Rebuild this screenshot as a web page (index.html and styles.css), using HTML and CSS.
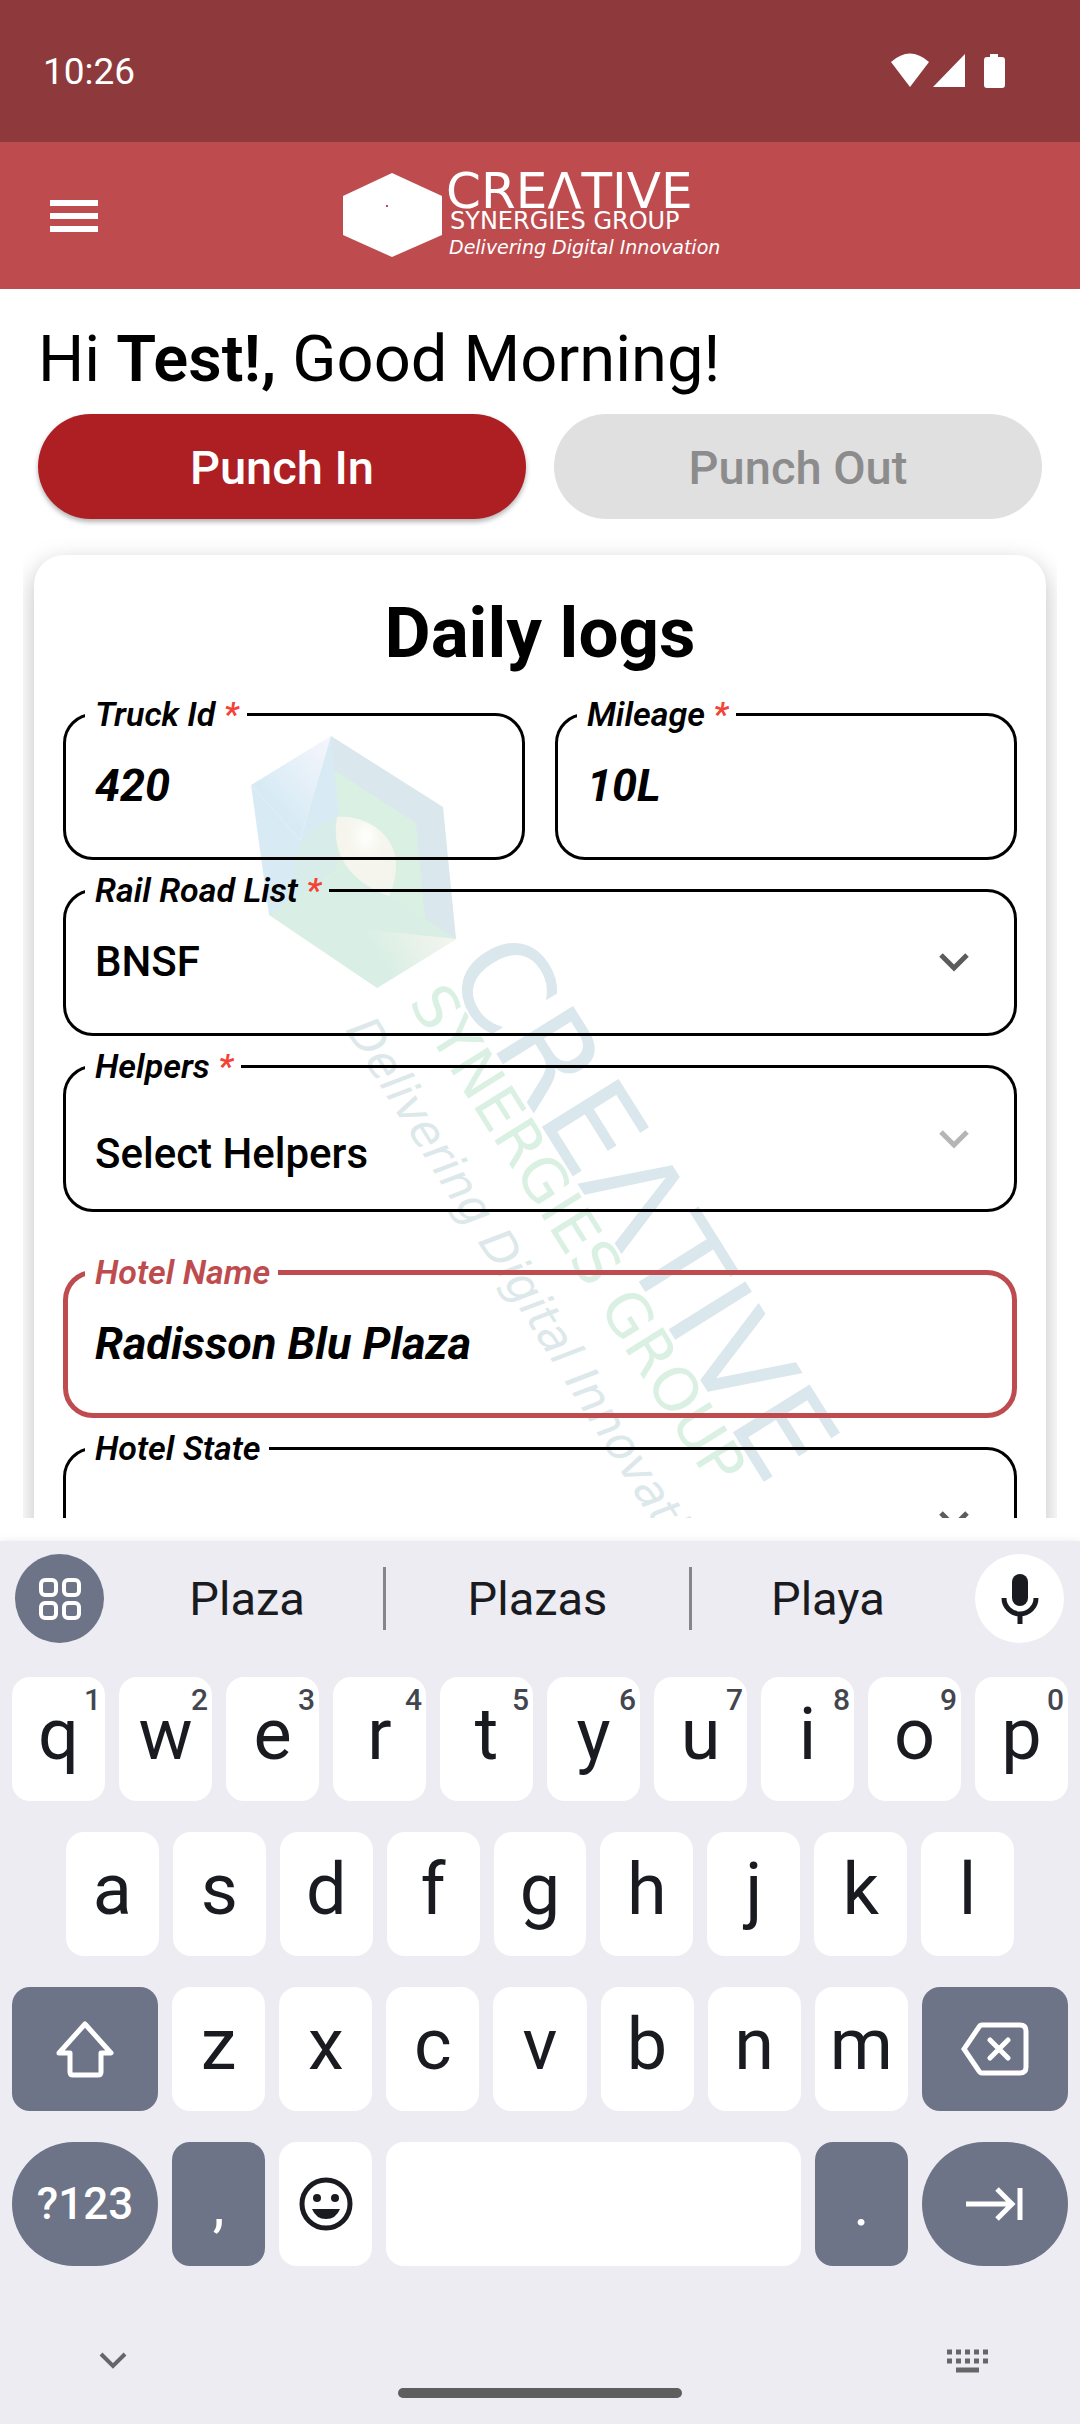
FILE: index.html
```html
<!DOCTYPE html>
<html lang="en">
<head>
<meta charset="utf-8">
<meta name="viewport" content="width=device-width, initial-scale=1">
<title>Daily logs</title>
<link rel="stylesheet" href="styles.css">
</head>
<body>
<div class="status-bar">
  <time class="clock">10:26</time>
  <svg class="status-icons" viewBox="0 0 116 36" aria-hidden="true">
    <path d="M1 9Q20 -8 39 9L20 34Z"/>
    <path d="M43 34L75 1V34Z"/>
    <path d="M100 1h8v3h4q3 0 3 3v25q0 3-3 3h-15q-3 0-3-3V7q0-3 3-3h3z"/>
  </svg>
</div>

<header class="app-bar">
  <button class="menu-button" type="button" aria-label="Menu"><span></span><span></span><span></span></button>
  <svg class="logo" viewBox="0 -12 394 112" role="img" aria-label="Creative Synergies Group">
    <path d="M0 24L49 1L99 24V63L49 85L0 63Z"/>
    <path class="logo-dot" d="M43 33h2v2h-2z"/>
    <text class="logo-name" x="103" y="36">CREΛTIVE</text>
    <text class="logo-group" x="107" y="57">SYNERGIES GROUP</text>
    <text class="logo-tagline" x="106" y="82">Delivering Digital Innovation</text>
  </svg>
</header>

<main class="content">
  <h1 class="greeting">Hi <strong>Test!,</strong> Good Morning!</h1>
  <div class="punch-row">
    <button class="punch punch-in" type="button">Punch In</button>
    <button class="punch punch-out" type="button" disabled>Punch Out</button>
  </div>

  <div class="card-viewport">
    <form class="card">
      <svg class="watermark" viewBox="230 720 640 1000" aria-hidden="true">
        <defs>
          <linearGradient id="wm-left" x1="1" y1="0" x2="0.4" y2="0.7"><stop offset="0" stop-color="#f7f6fc"/><stop offset="1" stop-color="#d8ebf5"/></linearGradient>
          <linearGradient id="wm-base" x1="1" y1="0.2" x2="0.2" y2="0.5"><stop offset="0" stop-color="#f5f5ef"/><stop offset="1" stop-color="#d9efe5"/></linearGradient>
          <radialGradient id="wm-pearl" cx="0.5" cy="0.25" r="0.7"><stop offset="0" stop-color="#fefefc"/><stop offset="0.4" stop-color="#f6f6ef"/><stop offset="1" stop-color="#f3f4ec"/></radialGradient>
        </defs>
        <path fill="#dae7ed" d="M331 736L443 807L456 939L420 920L331 770Z"/>
        <path fill="#d9f0e3" d="M334 770L416 823L425 919L456 939L269 915L300 850L338 818Z"/>
        <path fill="url(#wm-left)" d="M251 785L331 736L300 840Z"/>
        <path fill="#d8ebf5" d="M251 785L300 840L331 736L339 816L336 865L269 915Z"/>
        <path fill="#d8ede9" d="M338 818C310 824 294 846 294 872L297 901L336 869Z"/>
        <path fill="#d9efe5" d="M269 915L345 868L456 939L377 988Z"/>
        <path fill="url(#wm-base)" d="M362 929L456 939L377 988Z"/>
        <path fill="url(#wm-pearl)" d="M337 817C365 815 392 832 396 860Q397 880 389 896C360 886 329 862 337 817Z"/>
        <text class="wm-name" transform="translate(444 970) rotate(58)">CREΛTIVE</text>
        <text class="wm-group" transform="translate(408 1002) rotate(58)">SYNERGIES GROUP</text>
        <text class="wm-tagline" transform="translate(345 1030) rotate(58)">Delivering Digital Innovation</text>
      </svg>

      <h2 class="card-title">Daily logs</h2>
      <div class="field-pair">
        <fieldset class="field">
          <legend><label for="truck">Truck Id <span class="req">*</span></label></legend>
          <input class="value" id="truck" type="text" value="420">
        </fieldset>
        <fieldset class="field">
          <legend><label for="mileage">Mileage <span class="req">*</span></label></legend>
          <input class="value" id="mileage" type="text" value="10L">
        </fieldset>
      </div>
      <fieldset class="field">
        <legend><label for="railroad">Rail Road List <span class="req">*</span></label></legend>
        <div class="select-row">
          <select class="value" id="railroad"><option>BNSF</option></select>
          <svg class="chevron" viewBox="0 0 30 20" aria-hidden="true"><path d="M2 2L15 15L28 2"/></svg>
        </div>
      </fieldset>
      <fieldset class="field field-helpers">
        <legend><label for="helpers">Helpers <span class="req">*</span></label></legend>
        <div class="select-row">
          <select class="value" id="helpers"><option>Select Helpers</option></select>
          <svg class="chevron chevron-muted" viewBox="0 0 30 20" aria-hidden="true"><path d="M2 2L15 15L28 2"/></svg>
        </div>
      </fieldset>
      <fieldset class="field field-active">
        <legend><label for="hotel">Hotel Name</label></legend>
        <input class="value" id="hotel" type="text" value="Radisson Blu Plaza">
      </fieldset>
      <fieldset class="field">
        <legend><label for="state">Hotel State</label></legend>
        <div class="select-row">
          <select class="value" id="state"><option></option></select>
          <svg class="chevron" viewBox="0 0 30 20" aria-hidden="true"><path d="M2 2L15 15L28 2"/></svg>
        </div>
      </fieldset>
    </form>
  </div>
</main>

<section class="keyboard" aria-label="Keyboard">
  <div class="suggestions">
    <button class="round round-dark" type="button" aria-label="Tools">
      <svg viewBox="0 0 44 44" width="44" height="44" aria-hidden="true"><g fill="none" stroke="#fff" stroke-width="4"><rect x="3" y="3" width="15" height="15" rx="4"/><rect x="26" y="3" width="15" height="15" rx="4"/><rect x="3" y="26" width="15" height="15" rx="4"/><rect x="26" y="26" width="15" height="15" rx="4"/></g></svg>
    </button>
    <button class="word" type="button">Plaza</button>
    <button class="word word-mid" type="button">Plazas</button>
    <button class="word" type="button">Playa</button>
    <button class="round round-mic" type="button" aria-label="Voice input">
      <svg viewBox="0 0 38 52" width="38" height="52" aria-hidden="true"><rect x="11" y="1" width="16" height="32" rx="8" fill="#1a1b20"/><path d="M3 25a16 16 0 0 0 32 0M19 41v10" fill="none" stroke="#1a1b20" stroke-width="5"/></svg>
    </button>
  </div>

  <div class="keys">
    <div class="key-row">
      <button class="key" type="button">q<sup>1</sup></button>
      <button class="key" type="button">w<sup>2</sup></button>
      <button class="key" type="button">e<sup>3</sup></button>
      <button class="key" type="button">r<sup>4</sup></button>
      <button class="key" type="button">t<sup>5</sup></button>
      <button class="key" type="button">y<sup>6</sup></button>
      <button class="key" type="button">u<sup>7</sup></button>
      <button class="key" type="button">i<sup>8</sup></button>
      <button class="key" type="button">o<sup>9</sup></button>
      <button class="key" type="button">p<sup>0</sup></button>
    </div>
    <div class="key-row key-row-inset">
      <button class="key" type="button">a</button>
      <button class="key" type="button">s</button>
      <button class="key" type="button">d</button>
      <button class="key" type="button">f</button>
      <button class="key" type="button">g</button>
      <button class="key" type="button">h</button>
      <button class="key" type="button">j</button>
      <button class="key" type="button">k</button>
      <button class="key" type="button">l</button>
    </div>
    <div class="key-row">
      <button class="key key-dark key-wide" type="button" aria-label="Shift">
        <svg viewBox="0 0 60 58" width="60" height="58" aria-hidden="true"><path d="M30 4L56 33H46V52Q46 55 43 55H18Q15 55 15 52V33H4Z" fill="none" stroke="#fff" stroke-width="5" stroke-linejoin="round"/></svg>
      </button>
      <button class="key" type="button">z</button>
      <button class="key" type="button">x</button>
      <button class="key" type="button">c</button>
      <button class="key" type="button">v</button>
      <button class="key" type="button">b</button>
      <button class="key" type="button">n</button>
      <button class="key" type="button">m</button>
      <button class="key key-dark key-wide" type="button" aria-label="Backspace">
        <svg viewBox="0 0 68 54" width="68" height="54" aria-hidden="true"><path d="M21 3H59Q65 3 65 9V45Q65 51 59 51H21Q19 51 18 49L3 27L18 5Q19 3 21 3ZM29 18L47 36M47 18L29 36" fill="none" stroke="#fff" stroke-width="5" stroke-linecap="round"/></svg>
      </button>
    </div>
    <div class="key-row">
      <button class="key key-dark key-wide key-pill key-symbols" type="button">?123</button>
      <button class="key key-dark key-punct" type="button">,</button>
      <button class="key key-icon" type="button" aria-label="Emoji">
        <svg viewBox="0 0 54 54" width="54" height="54" aria-hidden="true"><circle cx="27" cy="27" r="24" fill="none" stroke="#1a1b20" stroke-width="5"/><circle cx="18" cy="21" r="4" fill="#1a1b20"/><circle cx="36" cy="21" r="4" fill="#1a1b20"/><path d="M13 32H41Q37 42 27 42T13 32Z" fill="#1a1b20"/></svg>
      </button>
      <button class="key key-space" type="button" aria-label="Space"></button>
      <button class="key key-dark key-punct" type="button">.</button>
      <button class="key key-dark key-wide key-pill key-icon" type="button" aria-label="Next field">
        <svg viewBox="0 0 58 34" width="58" height="34" aria-hidden="true"><path d="M0 17H45M31 2L46 17L31 32M54 1V33" fill="none" stroke="#fff" stroke-width="5"/></svg>
      </button>
    </div>
  </div>

  <div class="nav-row">
    <button class="nav-button" type="button" aria-label="Hide keyboard">
      <svg viewBox="0 0 28 18" width="28" height="18" aria-hidden="true"><path d="M2 2L14 14L26 2" fill="none" stroke="#66666a" stroke-width="4"/></svg>
    </button>
    <button class="nav-button" type="button" aria-label="Switch keyboard">
      <svg viewBox="0 0 41 24" width="41" height="24" aria-hidden="true"><path d="M0 3H41M0 12H41" fill="none" stroke="#66666a" stroke-width="5" stroke-dasharray="5 4"/><path d="M9 21H32" stroke="#66666a" stroke-width="5"/></svg>
    </button>
  </div>
  <div class="home-bar"></div>
</section>
</body>
</html>
```

FILE: styles.css
```css
* { box-sizing: border-box; }

body {
  margin: 0;
  min-height: 100vh;
  display: flex;
  flex-direction: column;
  background: #fff;
  color: #000;
  font-family: Roboto, "Noto Sans", sans-serif;
}

button {
  border: 0;
  padding: 0;
  background: none;
  color: inherit;
  font-family: inherit;
}

svg { display: block; flex: none; }

.status-bar {
  display: flex;
  align-items: center;
  justify-content: space-between;
  height: 142px;
  padding: 0 74px 0 43px;
  background: #8e3a3d;
  color: #fff;
}
.clock { font-size: 37px; }
.status-icons { width: 116px; height: 36px; fill: #fff; }

.app-bar {
  display: grid;
  grid-template-columns: 1fr auto 1fr;
  align-items: center;
  height: 147px;
  padding: 0 50px;
  background: #be4c4f;
}
.menu-button {
  display: grid;
  gap: 7px;
  width: 48px;
}
.menu-button span { height: 6px; background: #fff; }
.logo { width: 394px; height: 112px; fill: #fff; }
.logo-dot { fill: #be4c4f; }
.logo text, .watermark text { font-family: "DejaVu Sans", sans-serif; }
.logo-name { font-size: 50px; }
.logo-group { font-size: 24px; }
.logo-tagline { font-size: 19px; font-style: italic; }

.content {
  flex: 1 1 0;
  min-height: 0;
  display: flex;
  flex-direction: column;
}
.greeting {
  margin: 32px 38px 0;
  font-size: 65px;
  font-weight: 400;
  line-height: 76px;
}
.greeting strong { font-weight: 600; }

.punch-row {
  display: grid;
  grid-template-columns: 1fr 1fr;
  gap: 28px;
  margin: 17px 38px 0;
}
.punch {
  height: 105px;
  padding-top: 2px;
  border-radius: 53px;
  font-size: 47px;
  font-weight: 500;
}
.punch-in {
  background: #ae1f24;
  color: #fff;
  box-shadow: 0 3px 5px rgba(0, 0, 0, 0.3);
}
.punch-out { background: #e0e0e0; color: #8c8c8c; }

.card-viewport {
  flex: 1 1 0;
  min-height: 0;
  margin: 8px 23px 23px;
  padding: 28px 11px 0;
  overflow: hidden;
}
.card {
  position: relative;
  min-height: 1100px;
  padding: 36px 29px;
  border-radius: 30px;
  background: #fff;
  box-shadow: 0 8px 24px rgba(0, 0, 0, 0.25);
}
.watermark {
  position: absolute;
  left: 196px;
  top: 165px;
  width: 640px;
  height: 1000px;
}
.wm-name { font-size: 124px; fill: #dae7ed; }
.wm-group { font-size: 60px; fill: #d9f0e3; }
.wm-tagline { font-size: 46px; font-style: italic; fill: #dce8ea; }

.card-title {
  position: relative;
  margin: 0 0 20px;
  font-size: 71px;
  font-weight: 700;
  line-height: 84px;
  text-align: center;
}
.field-pair {
  display: grid;
  grid-template-columns: 1fr 1fr;
  gap: 30px;
}
.field {
  position: relative;
  min-width: 0;
  height: 165px;
  margin: 0 0 11px;
  padding: 17px 45px 0 19px;
  border: 3px solid #000;
  border-radius: 30px;
}
.field legend {
  padding: 0 8px 0 10px;
  font-size: 34px;
  font-weight: 600;
  font-style: italic;
  line-height: 38px;
}
.req { color: #f44336; }
.value {
  display: block;
  width: 100%;
  height: 70px;
  padding: 0 0 0 10px;
  border: 0;
  outline: 0;
  appearance: none;
  background: none;
  color: #000;
  font-family: inherit;
}
input.value { font-size: 45px; font-weight: 700; font-style: italic; }
select.value { font-size: 42px; font-weight: 500; }
.select-row { display: flex; align-items: center; }
.chevron {
  width: 30px;
  height: 20px;
  margin-top: 3px;
  fill: none;
  stroke: #5c5c5c;
  stroke-width: 5;
}
.chevron-muted { stroke: #b5b5b5; }
.field-helpers { margin-bottom: 41px; }
.field-helpers .value { height: 86px; padding-top: 16px; }
.field-helpers .select-row { align-items: start; }
.field-helpers .chevron { margin-top: 28px; }
.field-active { border: 5px solid #be4c4f; padding-left: 17px; padding-right: 43px; }
.field-active legend { color: #be4c4f; }

.keyboard {
  background: #edecf2;
  color: #1a1b20;
  box-shadow: 0 0 8px rgba(0, 0, 0, 0.08);
  padding: 13px 12px 26px;
}
.suggestions {
  display: flex;
  align-items: center;
  margin: 0 4px 34px 3px;
}
.round {
  display: grid;
  place-items: center;
  width: 89px;
  height: 89px;
  border-radius: 50%;
  background: #fff;
}
.round-dark { margin-right: 7px; background: #6e7488; }
.round-mic { margin-left: 11px; }
.word {
  flex: 9 1 0;
  height: 63px;
  font-size: 47px;
}
.word-mid {
  flex-grow: 10;
  border-left: 3px solid #85858a;
  border-right: 3px solid #85858a;
}
.keys { display: grid; gap: 31px; }
.key-row { display: flex; gap: 14px; }
.key-row-inset { padding: 0 54px; }
.key {
  position: relative;
  display: flex;
  align-items: center;
  justify-content: center;
  flex: 93 1 0;
  height: 124px;
  padding-bottom: 10px;
  border-radius: 18px;
  background: #fff;
  font-size: 72px;
}
.key sup {
  position: absolute;
  top: 8px;
  right: 4px;
  color: #44464f;
  font-size: 30px;
  font-weight: 500;
  line-height: 30px;
}
.key-dark { background: #6e7488; color: #fff; }
.key-wide { flex-grow: 146; padding-bottom: 0; }
.key-pill { border-radius: 62px; }
.key-icon { padding-bottom: 0; }
.key-symbols { font-size: 44px; font-weight: 500; }
.key-punct { font-size: 60px; padding-bottom: 0; }
.key-space { flex-grow: 414; }

.nav-row {
  display: flex;
  align-items: center;
  justify-content: space-between;
  margin: 83px 80px 0 87px;
}
.nav-button { display: block; }
.home-bar {
  width: 284px;
  height: 10px;
  margin: 15px auto 0;
  border-radius: 5px;
  background: #5e5e5e;
}
```
